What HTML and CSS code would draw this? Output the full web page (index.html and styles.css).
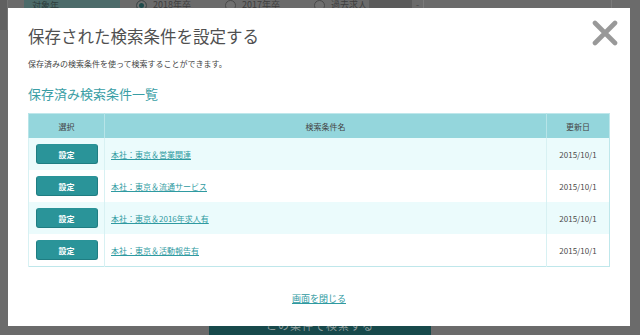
FILE: index.html
```html
<!DOCTYPE html>
<html lang="ja">
<head>
	<meta charset="utf-8">
	<title>保存された検索条件を設定する</title>
	<link rel="stylesheet" href="styles.css">
</head>
<body>
	<div class="page">
		<div class="filter-row">
			<div class="side-strip"></div>
			<div class="filter-label">対象年</div>
			<div class="radio-group">
				<span class="radio"><span class="radio-dot checked"></span>2018年卒</span>
				<span class="radio"><span class="radio-dot"></span>2017年卒</span>
				<span class="radio short"><span class="radio-dot"></span>過去求人</span>
			</div>
			<div class="filter-select"></div>
			<div class="filter-mark">-</div>
			<div class="filter-rule"></div>
			<div class="filter-rule right"></div>
		</div>
		<div class="page-foot">
			<div class="search-button">この条件で検索する</div>
		</div>
	</div>

	<div class="modal">
		<a class="modal-close" href="#" title="閉じる">
			<svg width="26" height="26" viewBox="0 0 26 26"><path d="M3 3 L23 23 M23 3 L3 23" stroke="#999" stroke-width="4.6" stroke-linecap="round" fill="none"/></svg>
		</a>
		<h1 class="modal-title">保存された検索条件を設定する</h1>
		<p class="modal-lead">保存済みの検索条件を使って検索することができます。</p>
		<h2 class="modal-heading">保存済み検索条件一覧</h2>
		<table class="saved-table">
			<colgroup><col class="w-select"><col><col class="w-date"></colgroup>
			<thead>
				<tr><th>選択</th><th>検索条件名</th><th>更新日</th></tr>
			</thead>
			<tbody>
				<tr><td class="col-select"><button class="set-button">設定</button></td><td class="col-name"><a href="#">本社：東京＆営業関連</a></td><td class="col-date">2015/10/1</td></tr>
				<tr><td class="col-select"><button class="set-button">設定</button></td><td class="col-name"><a href="#">本社：東京＆流通サービス</a></td><td class="col-date">2015/10/1</td></tr>
				<tr><td class="col-select"><button class="set-button">設定</button></td><td class="col-name"><a href="#">本社：東京＆2016年求人有</a></td><td class="col-date">2015/10/1</td></tr>
				<tr><td class="col-select"><button class="set-button">設定</button></td><td class="col-name"><a href="#">本社：東京＆活動報告有</a></td><td class="col-date">2015/10/1</td></tr>
			</tbody>
		</table>
		<div class="modal-foot"><a href="#">画面を閉じる</a></div>
	</div>
</body>
</html>
```

FILE: styles.css
```css
html, body{margin:0; padding:0;}
body{background:#6b6b6b; font-family:"Noto Sans CJK JP", "Noto Sans", sans-serif; color:#444; overflow:hidden;}

/* dimmed page behind the dialog */
.page{height:100vh; display:flex; flex-direction:column; justify-content:space-between;}
.filter-row{display:flex; align-items:flex-start; height:30px; font-size:9px; line-height:10px; color:#3e3e3e;}
.side-strip{width:7px; height:30px; background:#606060; border-right:1px solid #757575;}
.filter-label{width:96px; height:30px; margin-left:16px; background:#4c6b6a; padding:1px 0 0 8px; box-sizing:border-box; color:#2e3e3e;}
.radio-group{display:flex; margin-left:16px;}
.radio{display:flex; align-items:flex-start; width:89px;}
.radio.short{width:55px;}
.radio-dot{width:9px; height:9px; border:1px solid #4a4a4a; border-radius:50%; margin-right:6px; background:#707070; box-sizing:content-box;}
.radio-dot.checked{background:#1e4a4b; box-shadow:inset 0 0 0 2px #707070;}
.filter-select{width:43px; height:30px; background:#5b5b5b;}
.filter-mark{margin-left:4px; color:#444;}
.filter-rule{width:1px; height:30px; background:#7a7a7a; margin-left:4px;}
.filter-rule.right{margin-left:187px;}
.page-foot{height:16px; overflow:hidden; display:flex; justify-content:center;}
.search-button{width:222px; height:26px; background:#17494b; color:#8e9c9c; font-size:11px; line-height:12px; text-align:center; letter-spacing:1px;}

/* dialog */
.modal{position:fixed; left:8px; top:8px; width:622px; height:318px; background:#fff; padding:16px 20px 0; box-sizing:border-box;}
.modal-close{position:absolute; top:12px; right:12px; display:block; width:26px; height:26px;}
.modal-close svg{display:block;}
.modal-title{margin:0; font-size:16.5px; line-height:24px; font-weight:normal; color:#505050;}
.modal-lead{margin:10px 0 0; font-size:8px; line-height:12px; color:#444;}
.modal-heading{margin:15px 0 0; font-size:13px; line-height:18px; font-weight:normal; color:#3a9ea5;}

.saved-table{margin-top:10px; width:582px; table-layout:fixed; border-collapse:collapse; border:1px solid #bfe7eb; font-size:8px; color:#4a4a4a;}
.saved-table .w-select{width:76px;}
.saved-table .w-date{width:63px;}
.saved-table th{height:24px; padding:0; background:#94d6dc; font-weight:normal; color:#444; border-left:1px solid #b7e4e8; text-align:center;}
.saved-table td{height:32px; padding:0; border-left:1px solid #d8f1f3;}
.saved-table tbody tr:nth-child(odd) td{background:#ebfbfc;}
.saved-table .col-select, .saved-table .col-date{text-align:center;}
.saved-table .col-name{padding-left:6px;}
.saved-table a{color:#2f9aa1; text-decoration:underline;}

.set-button{width:62px; height:20px; border:1px solid #1f7d82; border-top-color:#2a9398; border-radius:3px; background:#2a9499; color:#fff; font-family:inherit; font-size:8px; font-weight:bold; padding:0; cursor:pointer; display:block; margin:0 auto;}

.modal-foot{margin-top:25px; text-align:center; font-size:9px; line-height:14px;}
.modal-foot a{color:#2f9aa1;}
```
